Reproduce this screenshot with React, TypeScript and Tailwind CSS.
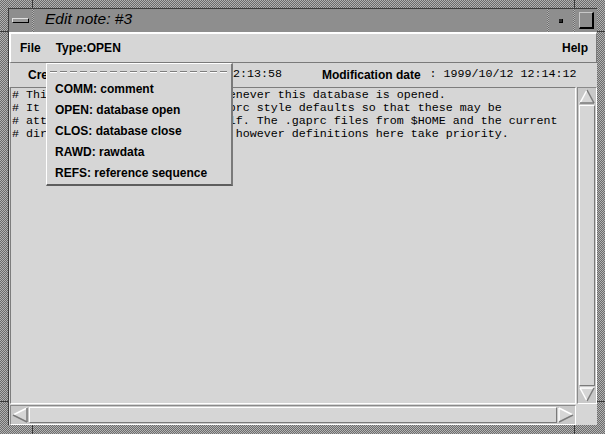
const dither = 'bg-[image:repeating-conic-gradient(#6c6c6c_0_25%,#b2b2b2_0_50%)] bg-[length:2px_2px]'

const noteLines = [
  '# This note is loaded by gap whenever this database is opened.',
  '# It can be used to replace .gaprc style defaults so that these may be',
  '# attached to the database itself. The .gaprc files from $HOME and the current',
  '# directory are also processed, however definitions here take priority.',
]

const noteTypes = [
  'COMM: comment',
  'OPEN: database open',
  'CLOS: database close',
  'RAWD: rawdata',
  'REFS: reference sequence',
]

function Arrow({ dir }: { dir: 'up' | 'down' | 'left' | 'right' }) {
  // triangles drawn in a 16x15 box, light edges top/left, dark edges bottom/right
  if (dir === 'up')
    return (
      <svg width="16" height="15" viewBox="0 0 16 15">
        <polygon points="8,1 15,14 1,14" fill="#d6d6d6" />
        <line x1="8" y1="1" x2="1" y2="14" stroke="#fff" strokeWidth="1.5" />
        <line x1="8" y1="1" x2="15" y2="14" stroke="#7a7a7a" strokeWidth="1.5" />
        <line x1="1" y1="14" x2="15" y2="14" stroke="#7a7a7a" strokeWidth="1.5" />
      </svg>
    )
  if (dir === 'down')
    return (
      <svg width="16" height="15" viewBox="0 0 16 15">
        <polygon points="1,1 15,1 8,14" fill="#d6d6d6" />
        <line x1="1" y1="1" x2="15" y2="1" stroke="#fff" strokeWidth="1.5" />
        <line x1="1" y1="1" x2="8" y2="14" stroke="#fff" strokeWidth="1.5" />
        <line x1="15" y1="1" x2="8" y2="14" stroke="#7a7a7a" strokeWidth="1.5" />
      </svg>
    )
  if (dir === 'left')
    return (
      <svg width="16" height="16" viewBox="0 0 16 16">
        <polygon points="1,8 15,1 15,15" fill="#d6d6d6" />
        <line x1="1" y1="8" x2="15" y2="1" stroke="#fff" strokeWidth="1.5" />
        <line x1="1" y1="8" x2="15" y2="15" stroke="#7a7a7a" strokeWidth="1.5" />
        <line x1="15" y1="1" x2="15" y2="15" stroke="#7a7a7a" strokeWidth="1.5" />
      </svg>
    )
  return (
    <svg width="16" height="16" viewBox="0 0 16 16">
      <polygon points="1,1 15,8 1,15" fill="#d6d6d6" />
      <line x1="1" y1="1" x2="1" y2="15" stroke="#fff" strokeWidth="1.5" />
      <line x1="1" y1="1" x2="15" y2="8" stroke="#fff" strokeWidth="1.5" />
      <line x1="15" y1="8" x2="1" y2="15" stroke="#7a7a7a" strokeWidth="1.5" />
    </svg>
  )
}

function VScroll() {
  return (
    <div className="flex h-[317px] w-[20px] flex-col gap-[1px] border border-t-[#8a8a8a] border-l-[#8a8a8a] border-b-white border-r-white bg-[#c9c9c9] p-[1px]">
      <Arrow dir="up" />
      <div className="flex-1 border border-t-white border-l-white border-b-[#7a7a7a] border-r-[#7a7a7a] bg-[#d6d6d6]" />
      <Arrow dir="down" />
    </div>
  )
}

function HScroll() {
  return (
    <div className="flex h-[20px] w-[566px] gap-[1px] border border-t-[#8a8a8a] border-l-[#8a8a8a] border-b-white border-r-white bg-[#c9c9c9] p-[1px]">
      <Arrow dir="left" />
      <div className="flex-1 border border-t-white border-l-white border-b-[#7a7a7a] border-r-[#7a7a7a] bg-[#d6d6d6]" />
      <Arrow dir="right" />
    </div>
  )
}

export default function App() {
  return (
    <div className={`relative h-[434px] w-[605px] overflow-hidden pb-[9px] pl-[8px] pr-[8px] pt-[8px] font-['Liberation_Sans',Arial,sans-serif] text-black ${dither}`}>
      {/* frame corner ticks */}
      <div className="absolute left-[32px] top-0 h-[8px] w-px bg-[#3a3a3a]" />
      <div className="absolute left-[574px] top-0 h-[8px] w-px bg-[#3a3a3a]" />
      <div className="absolute bottom-0 left-[32px] h-[9px] w-px bg-[#3a3a3a]" />
      <div className="absolute bottom-0 left-[574px] h-[9px] w-px bg-[#3a3a3a]" />
      <div className="absolute left-0 top-[31px] h-px w-[8px] bg-[#3a3a3a]" />
      <div className="absolute left-0 top-[401px] h-px w-[8px] bg-[#3a3a3a]" />
      <div className="absolute right-0 top-[31px] h-px w-[8px] bg-[#3a3a3a]" />
      <div className="absolute right-0 top-[401px] h-px w-[8px] bg-[#3a3a3a]" />

      <div className="flex h-full flex-col border-l border-t border-[#3c3c3c]">
        {/* Title bar */}
        <div className="flex h-[23px] bg-[#8e8e8e]">
          <div className="flex w-[23px] items-center justify-center">
            <div className="h-[5px] w-[17px] border border-t-[#e0e0e0] border-l-[#e0e0e0] border-b-black border-r-black bg-[#9a9a9a]" />
          </div>
          <div className={`w-[2px] ${dither}`} />
          <div className="flex flex-1 items-center pb-[4px] pl-[11px] text-[15.5px] italic">Edit note: #3</div>
          <div className={`w-[2px] ${dither}`} />
          <div className="flex w-[24px] items-center justify-center">
            <div className="h-[4px] w-[4px] border-b border-r border-b-black border-r-black bg-[#2a2a2a]" />
          </div>
          <div className={`w-[2px] ${dither}`} />
          <div className="flex w-[22px] items-center justify-center">
            <div className="h-[17px] w-[15px] border-b-2 border-l border-r-2 border-t border-b-black border-l-[#c8c8c8] border-r-black border-t-[#c8c8c8] bg-[#8e8e8e]" />
          </div>
        </div>

        {/* Window body */}
        <div className="flex flex-1 flex-col bg-[#d6d6d6]">
          <div className="flex h-[31px] items-center border-b border-l-2 border-r border-t-2 border-b-[#7a7a7a] border-l-white border-r-[#7a7a7a] border-t-white pl-[9px] pr-[8px] text-[12px] font-bold">
            <span>File</span>
            <span className="ml-[15px]">Type:OPEN</span>
            <span className="ml-auto">Help</span>
          </div>

          <div className="flex h-[24px] items-center border-l border-l-white pl-[18px] text-[12px]">
            <span className="w-[98px] font-bold">Creation date</span>
            <span className="ml-[9px] font-['Liberation_Mono',monospace] text-[11.67px]">: 1999/10/12 12:13:58</span>
            <span className="ml-[40px] font-bold">Modification date</span>
            <span className="ml-[9px] font-['Liberation_Mono',monospace] text-[11.67px]">: 1999/10/12 12:14:12</span>
          </div>

          <div className="flex flex-col pl-[1px]">
            <div className="flex h-[317px] gap-[1px]">
              <div className="w-[566px] overflow-hidden whitespace-pre border border-b-white border-l-[#7d7d7d] border-r-white border-t-[#7d7d7d] pl-[1px] pt-px font-['Liberation_Mono',monospace] text-[11.67px] leading-[13px]">
                {noteLines.map((line, i) => (
                  <div key={i}>{line}</div>
                ))}
              </div>
              <VScroll />
            </div>
            <div className="mt-[1px] flex">
              <HScroll />
            </div>
          </div>
        </div>
      </div>

      {/* Type option menu, open */}
      <div className="absolute left-[46px] top-[63px] flex h-[123px] w-[187px] flex-col border-b-2 border-l border-r-2 border-t border-b-[#5e5e5e] border-l-white border-r-[#7a7a7a] border-t-white bg-[#d6d6d6]">
        <div className="h-[14px] px-[3px] pt-[7px]">
          <div className="h-px w-full bg-[image:repeating-linear-gradient(90deg,#7e7e7e_0_7px,transparent_7px_10px)]" />
          <div className="h-px w-full bg-[image:repeating-linear-gradient(90deg,#ffffff_0_7px,transparent_7px_10px)]" />
        </div>
        {noteTypes.map((t) => (
          <div key={t} className="flex h-[21px] items-center pl-[8px] text-[12px] font-bold">
            {t}
          </div>
        ))}
      </div>
    </div>
  )
}
